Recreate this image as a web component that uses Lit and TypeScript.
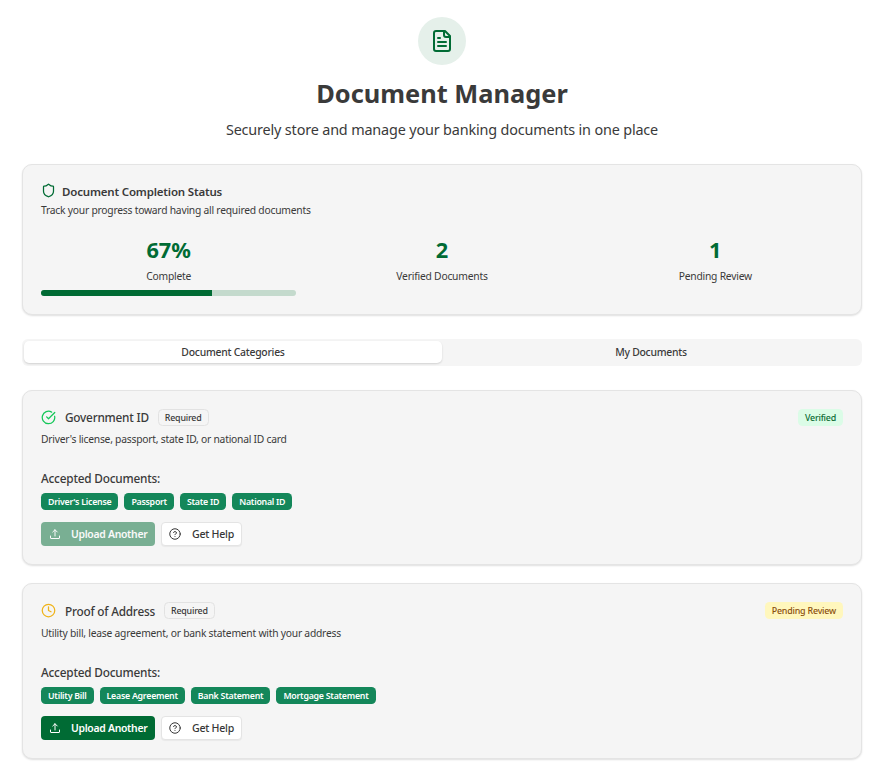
import { LitElement, html, css, svg, nothing } from "lit";
import { customElement, property, state } from "lit/decorators.js";
import { classMap } from "lit/directives/class-map.js";
import { styleMap } from "lit/directives/style-map.js";

const ICONS = {
  file: svg`<path d="M15 2H6a2 2 0 0 0-2 2v16a2 2 0 0 0 2 2h12a2 2 0 0 0 2-2V7Z"/><path d="M14 2v4a2 2 0 0 0 2 2h4"/><path d="M10 9H8"/><path d="M16 13H8"/><path d="M16 17H8"/>`,
  shield: svg`<path d="M20 13c0 5-3.5 7.500-7.660 8.950a1 1 0 0 1-.67-.01C7.500 20.500 4 18 4 13V6a1 1 0 0 1 1-1c2 0 4.500-1.200 6.240-2.720a1.170 1.170 0 0 1 1.520 0C14.510 3.810 17 5 19 5a1 1 0 0 1 1 1z"/>`,
  check: svg`<path d="M21.801 10A10 10 0 1 1 17 3.335"/><path d="m9 11 3 3L22 4"/>`,
  clock: svg`<circle cx="12" cy="12" r="10"/><path d="M12 6v6l4 2"/>`,
  upload: svg`<path d="M3 16v4a1 1 0 0 0 1 1h16a1 1 0 0 0 1-1v-4"/><path d="M7.500 8l4.500-4.500 4.500 4.500"/><path d="M12 3.500v12.500"/>`,
  help: svg`<circle cx="12" cy="12" r="10.500"/><path d="M9.090 9a3 3 0 0 1 5.830 1c0 2-3 3-3 3"/><path d="M12 17h.01"/>`,
};

type IconName = keyof typeof ICONS;

@customElement("ui-icon")
class UiIcon extends LitElement {
  @property() name: IconName = "file";
  static styles = css`
    :host { display: inline-flex; flex: none; width: 15px; height: 15px; }
    svg { width: 100%; height: 100%; fill: none; stroke: currentColor; stroke-width: 2; stroke-linecap: round; stroke-linejoin: round; }
  `;
  render() {
    return html`<svg viewBox="0 0 24 24" aria-hidden="true">${ICONS[this.name]}</svg>`;
  }
}

interface Category {
  title: string;
  description: string;
  status: "verified" | "pending";
  accepted: string[];
}

const CATEGORIES: Category[] = [
  {
    title: "Government ID",
    description: "Driver's license, passport, state ID, or national ID card",
    status: "verified",
    accepted: ["Driver's License", "Passport", "State ID", "National ID"],
  },
  {
    title: "Proof of Address",
    description: "Utility bill, lease agreement, or bank statement with your address",
    status: "pending",
    accepted: ["Utility Bill", "Lease Agreement", "Bank Statement", "Mortgage Statement"],
  },
];

const STATS = [
  { value: "67%", label: "Complete", progress: 67 },
  { value: "2", label: "Verified Documents" },
  { value: "1", label: "Pending Review" },
];

@customElement("category-card")
class CategoryCard extends LitElement {
  @property({ attribute: false }) category!: Category;
  static styles = css`
    :host { display: block; box-sizing: border-box; height: 175.25px; padding: 17.3px 18px 0; border: 1px solid #e4e4e4; border-radius: 10px; background: #f5f5f5; box-shadow: 0 1px 2px rgba(0, 0, 0, 0.13); }
    .head { display: flex; align-items: center; height: 18px; }
    .title { margin: 0 9px; font-size: 11.8px; letter-spacing: -0.22px; font-weight: 500; line-height: 18px; }
    .verified-icon { color: #15c759; }
    .pending-icon { color: #efb31a; }
    .badge { box-sizing: border-box; height: 17px; padding: 0 7px; border-radius: 4.5px; font-size: 8.9px; letter-spacing: -0.2px; line-height: 18px; font-weight: 500; white-space: nowrap; }
    .outline { padding: 0 6px; border: 1px solid #e2e2e2; line-height: 16px; }
    .status { margin-left: auto; }
    .verified { background: #dbfce7; color: #0a6a33; }
    .pending { background: #fff7bd; color: #8a4f0c; }
    .solid { background: #14875a; color: #fff; font-weight: 600; font-size: 8.8px; letter-spacing: -0.25px; line-height: 19px; }
    .description { margin-top: 5px; font-size: 10.3px; letter-spacing: -0.235px; line-height: 16px; height: 15px; }
    .accepted { margin-top: 24px; font-size: 11.8px; letter-spacing: -0.2px; line-height: 17px; height: 18px; font-weight: 500; }
    .badges { display: flex; gap: 6px; margin-top: 5px; }
    .actions { display: flex; gap: 6px; margin-top: 12px; }
    .button { box-sizing: border-box; display: flex; align-items: center; height: 24px; border: 0; border-radius: 4px; font-family: inherit; }
    .button ui-icon { width: 12px; height: 12px; margin-right: 10px; }
    .upload { width: 114px; padding: 0 8px; background: #006b34; color: #fff; font-size: 10.4px; letter-spacing: -0.28px; font-weight: 600; }
    .upload:disabled { opacity: 0.5; }
    .help { width: 81px; padding: 0 7px; border: 1px solid #e4e4e4; background: #fff; color: #373737; font-size: 10.6px; letter-spacing: -0.25px; font-weight: 500; box-shadow: 0 1px 1px rgba(0, 0, 0, 0.05); }
    .help ui-icon { margin-right: 11px; }
    .button span { white-space: nowrap; }
  `;
  render() {
    const c = this.category;
    const verified = c.status === "verified";
    return html`
      <div class="head">
        <ui-icon class=${verified ? "verified-icon" : "pending-icon"} name=${verified ? "check" : "clock"}></ui-icon>
        <span class="title">${c.title}</span>
        <span class="badge outline">Required</span>
        <span class="badge status ${c.status}">${verified ? "Verified" : "Pending Review"}</span>
      </div>
      <div class="description">${c.description}</div>
      <div class="accepted">Accepted Documents:</div>
      <div class="badges">${c.accepted.map((name) => html`<span class="badge solid">${name}</span>`)}</div>
      <div class="actions">
        <button class="button upload" ?disabled=${verified}><ui-icon name="upload"></ui-icon><span>Upload Another</span></button>
        <button class="button help"><ui-icon name="help"></ui-icon><span>Get Help</span></button>
      </div>
    `;
  }
}

@customElement("app-root")
class AppRoot extends LitElement {
  @state() private tab = 0;
  static styles = css`
    :host { display: block; box-sizing: border-box; min-height: 773px; padding: 17px 22px 0; background: #fff; color: #3a3a3a; font-family: "Noto Sans", "Open Sans", sans-serif; }
    .hero { display: flex; flex-direction: column; align-items: center; height: 147px; }
    .emblem { display: flex; align-items: center; justify-content: center; width: 48px; height: 48px; border-radius: 50%; background: #e5f0ea; color: #006b34; }
    .emblem ui-icon { width: 24px; height: 24px; }
    .heading { margin: 12px 0 0; font-size: 25.4px; line-height: 33px; font-weight: 700; }
    .tagline { margin: 9px 0 0; font-size: 14.4px; letter-spacing: -0.16px; line-height: 21px; }
    .summary { box-sizing: border-box; height: 151px; padding: 18px; border: 1px solid #e4e4e4; border-radius: 10px; background: #f5f5f5; box-shadow: 0 1px 2px rgba(0, 0, 0, 0.13); }
    .summary-title { display: flex; align-items: center; gap: 6px; height: 16px; font-size: 11.5px; letter-spacing: -0.18px; line-height: 17px; font-weight: 600; }
    .summary-title ui-icon { position: relative; top: -0.5px; color: #006b34; }
    .summary-note { margin-top: 3px; font-size: 10.3px; letter-spacing: -0.23px; line-height: 16px; }
    .stats { display: grid; grid-template-columns: repeat(3, 1fr); gap: 18px; margin-top: 17px; text-align: center; }
    .value { color: #006b34; font-size: 21.75px; line-height: 30px; font-weight: 700; }
    .label { margin-top: 4px; font-size: 10.3px; letter-spacing: -0.22px; line-height: 15px; }
    .track { height: 6px; margin-top: 6px; border-radius: 3px; overflow: hidden; background: #c4dacd; }
    .fill { height: 100%; background: #006b34; }
    .tabs { display: grid; grid-template-columns: 1fr 1fr; box-sizing: border-box; height: 27px; margin: 24px 0; padding: 2px; border-radius: 6px; background: #f5f5f5; }
    .tab { height: 22px; padding: 0; border: 0; border-radius: 5px; background: none; color: #3a3a3a; font: 500 10.4px/22px "Noto Sans", "Open Sans", sans-serif; letter-spacing: -0.25px; }
    .active { background: #fff; box-shadow: 0 1px 2px rgba(0, 0, 0, 0.15); }
    .cards { display: grid; gap: 18px; }
  `;
  render() {
    return html`
      <header class="hero">
        <div class="emblem"><ui-icon name="file"></ui-icon></div>
        <h1 class="heading">Document Manager</h1>
        <p class="tagline">Securely store and manage your banking documents in one place</p>
      </header>
      <section class="summary">
        <div class="summary-title"><ui-icon name="shield"></ui-icon>Document Completion Status</div>
        <div class="summary-note">Track your progress toward having all required documents</div>
        <div class="stats">
          ${STATS.map((s) => html`
            <div>
              <div class="value">${s.value}</div>
              <div class="label">${s.label}</div>
              ${s.progress ? html`<div class="track"><div class="fill" style=${styleMap({ width: `${s.progress}%` })}></div></div>` : nothing}
            </div>`)}
        </div>
      </section>
      <nav class="tabs">
        ${["Document Categories", "My Documents"].map((label, i) => html`
          <button class=${classMap({ tab: true, active: this.tab === i })} @click=${() => (this.tab = i)}>${label}</button>`)}
      </nav>
      <main class="cards">${CATEGORIES.map((c) => html`<category-card .category=${c}></category-card>`)}</main>
    `;
  }
}
